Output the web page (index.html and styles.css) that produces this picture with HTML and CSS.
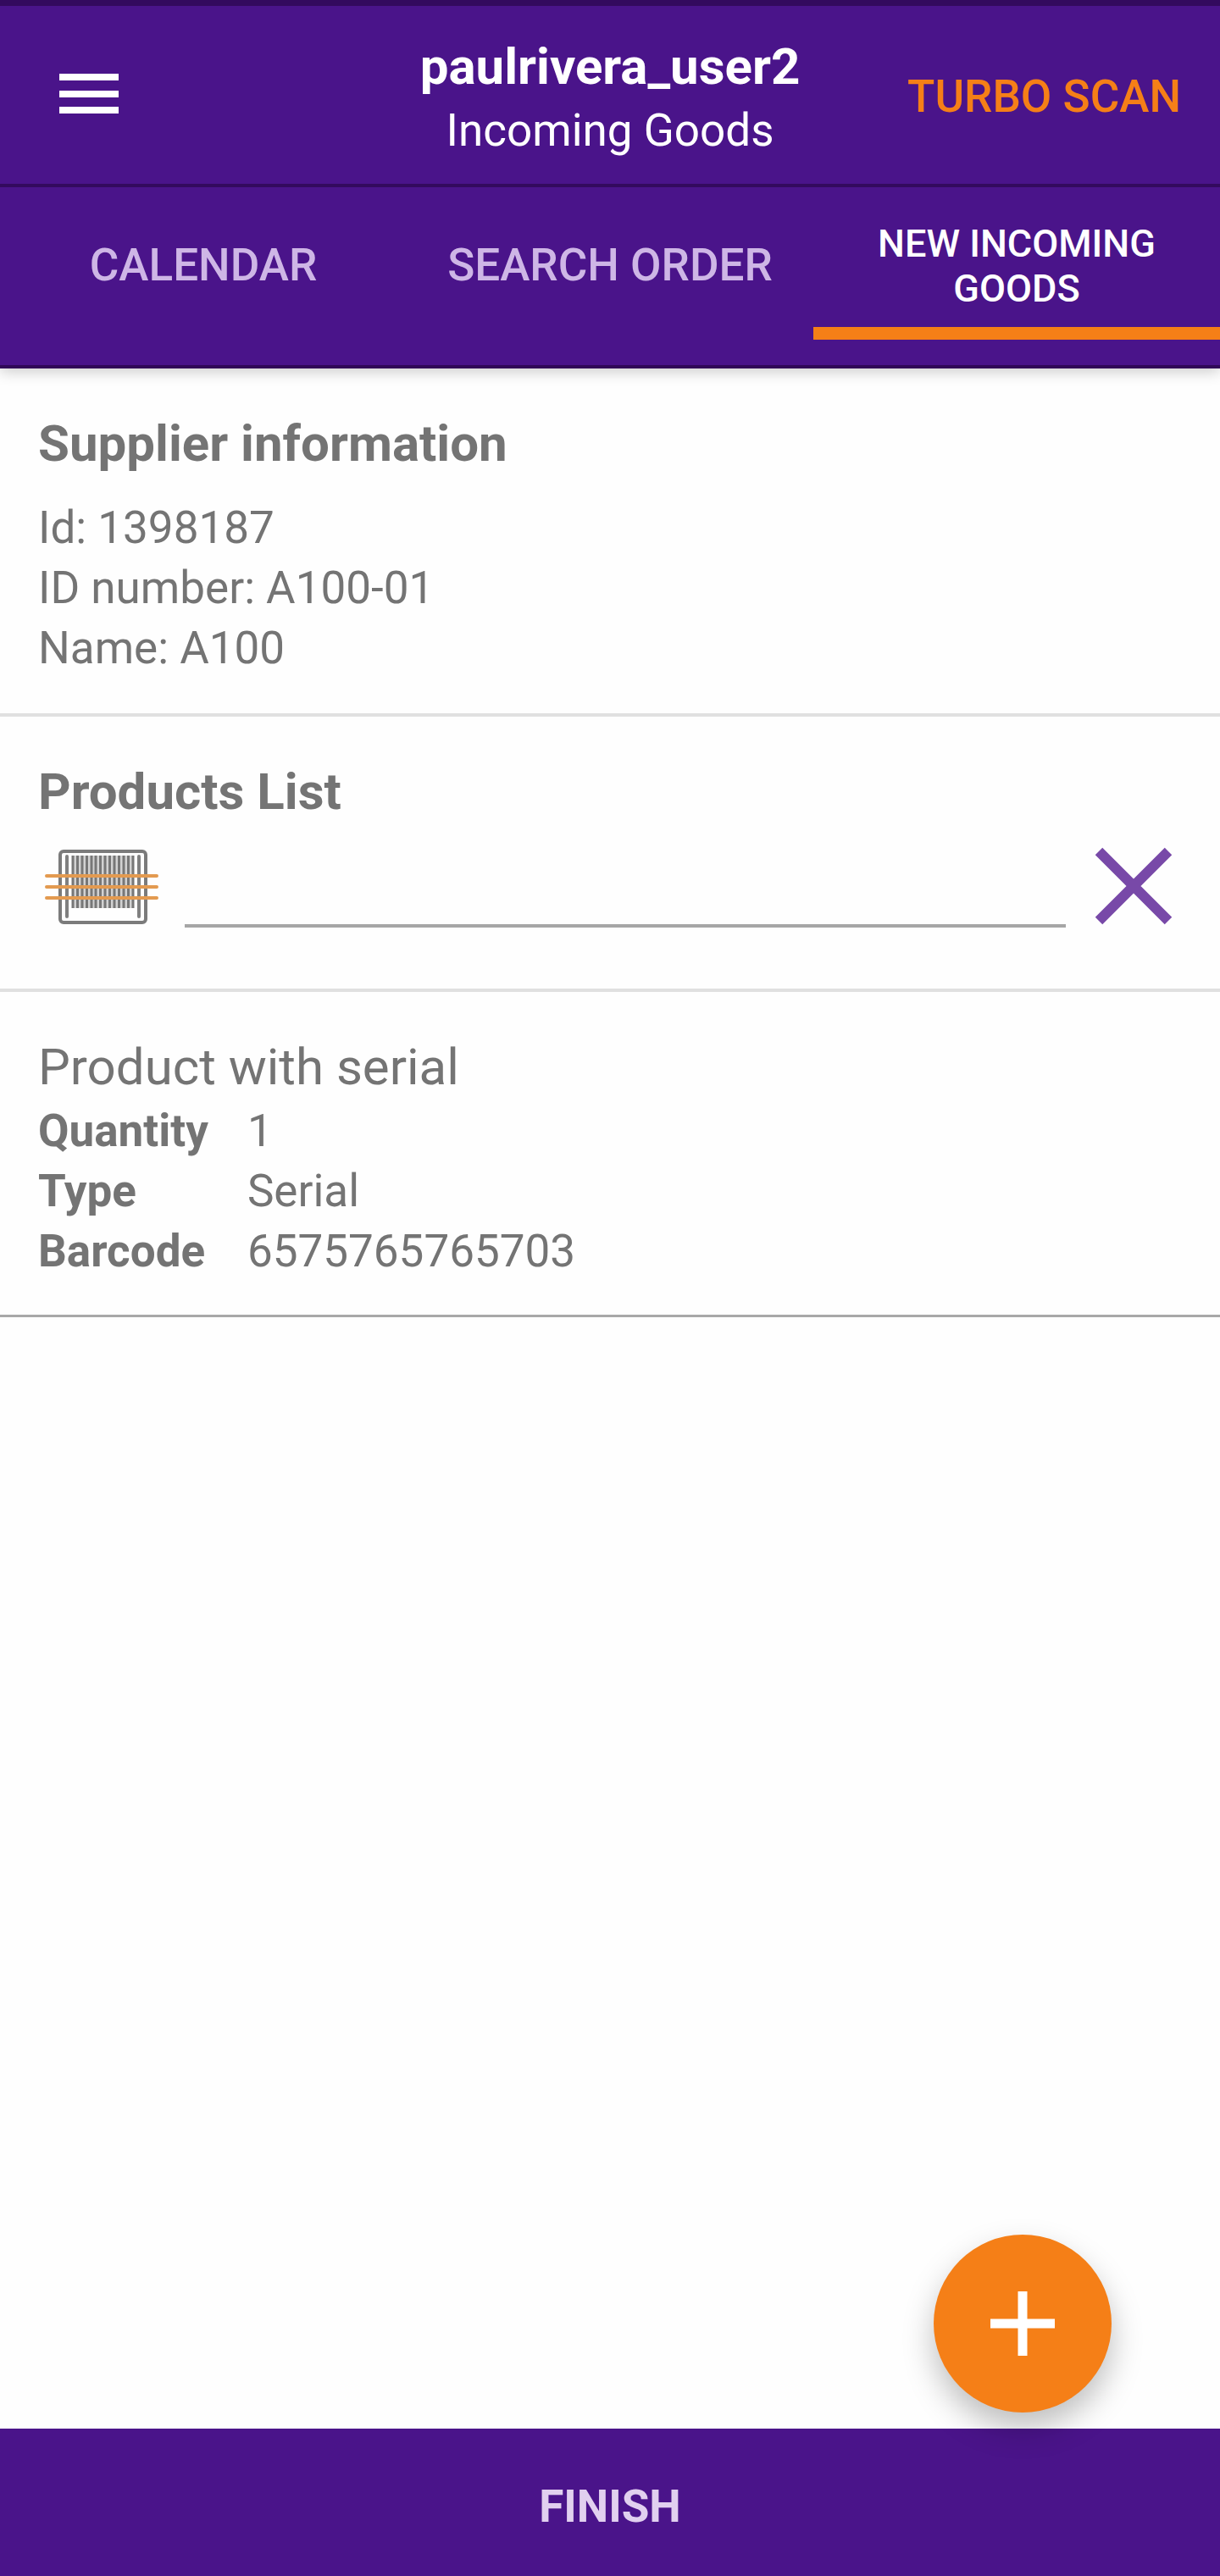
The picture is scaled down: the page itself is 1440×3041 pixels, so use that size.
FILE: index.html
```html
<!DOCTYPE html>
<html lang="en">
<head>
    <meta charset="UTF-8">
    <meta name="viewport" content="width=device-width, initial-scale=1.0">
    <title>Incoming Goods</title>
    <link rel="stylesheet" href="styles.css">
</head>
<body>
    <header class="header">
        <div class="top-bar">
            <button type="button" class="menu-btn" aria-label="Menu">
                <svg width="70" height="48" viewBox="0 0 70 48" fill="#fff">
                    <rect width="70" height="8" />
                    <rect y="20" width="70" height="8" />
                    <rect y="39" width="70" height="8" />
                </svg>
            </button>
            <div class="heading">
                <h1>paulrivera_user2</h1>
                <p>Incoming Goods</p>
            </div>
            <button type="button" class="turbo-btn">TURBO SCAN</button>
        </div>
        <nav class="tabs">
            <a href="#calendar" class="tab">CALENDAR</a>
            <a href="#search" class="tab">SEARCH ORDER</a>
            <a href="#new" class="tab active">NEW INCOMING GOODS</a>
        </nav>
    </header>

    <main>
        <section class="section supplier">
            <h2>Supplier information</h2>
            <p>Id: 1398187</p>
            <p>ID number: A100-01</p>
            <p>Name: A100</p>
        </section>

        <section class="section products">
            <h2><label for="barcode">Products List</label></h2>
            <form class="scan-row">
                <svg class="barcode-icon" width="150" height="98" viewBox="0 0 150 98" fill="none">
                    <rect x="26" y="8" width="101" height="84" rx="4" stroke="#7b7b7b" stroke-width="4" />
                    <path d="M34 14v71M119 14v71" stroke="#808080" stroke-width="4" stroke-linecap="round" />
                    <rect x="40" y="13" width="73" height="62" fill="#d2d2d2" />
                    <path d="M41 13v62M46.500 13v62M52 13v62M57.500 13v62M63 13v62M68 13v62M73.500 13v62M79 13v62M84.500 13v62M90 13v62M95.500 13v62M101 13v62M106.500 13v62M112 13v62" stroke="#777" stroke-width="3" />
                    <path d="M10 37h130M10 50h130M10 63h130" stroke="#e39a50" stroke-width="4" stroke-linecap="round" />
                </svg>
                <input type="text" id="barcode" name="barcode">
                <button type="reset" class="clear-btn" aria-label="Clear">
                    <svg width="92" height="92" viewBox="0 0 92 92">
                        <path d="M5 5l82 82M87 5L5 87" stroke="#7849a8" stroke-width="12" />
                    </svg>
                </button>
            </form>
        </section>

        <section class="section product">
            <h3>Product with serial</h3>
            <table>
                <tr><th scope="row">Quantity</th><td>1</td></tr>
                <tr><th scope="row">Type</th><td>Serial</td></tr>
                <tr><th scope="row">Barcode</th><td>6575765765703</td></tr>
            </table>
        </section>
    </main>

    <button type="button" class="add-btn" aria-label="Add product">
        <svg width="76" height="76" viewBox="0 0 76 76">
            <path d="M38 0v76M0 38h76" stroke="#fff" stroke-width="11" />
        </svg>
    </button>
    <button type="button" class="finish-btn">FINISH</button>
</body>
</html>
```

FILE: styles.css
```css
* {
    box-sizing: border-box;
    margin: 0;
    padding: 0;
}

body {
    display: flex;
    flex-direction: column;
    min-height: 100vh;
    background: #fefefe;
    color: #747474;
    font-family: Roboto, sans-serif;
    font-size: 53px;
    line-height: 71px;
}

button {
    border: none;
    background: none;
    font: inherit;
    cursor: pointer;
}

svg {
    display: block;
}

h1, h2, h3 {
    font-size: 60px;
    line-height: 80px;
}

/* header */
.header {
    background: #4a148a;
    border-top: 7px solid #330a5e;
    border-bottom: 4px solid #300858;
    box-shadow: 0 4px 16px rgba(0, 0, 0, 0.2);
}

.top-bar {
    display: grid;
    grid-template-columns: 1fr auto 1fr;
    height: 214px;
    padding: 32px 46px 0;
    border-bottom: 4px solid #330a5e;
    color: #fff;
    text-align: center;
}

.menu-btn {
    justify-self: start;
    align-self: start;
    padding: 48px 24px;
}

.turbo-btn {
    justify-self: end;
    align-self: start;
    padding-top: 40px;
    color: #f57f17;
    font-weight: 500;
}

/* tabs */
.tabs {
    display: flex;
    padding-bottom: 30px;
}

.tab {
    display: flex;
    flex: 1;
    align-items: center;
    justify-content: center;
    height: 180px;
    padding: 20px 45px 0;
    border-bottom: 15px solid transparent;
    color: #ceb6e6;
    font-weight: 500;
    line-height: 53px;
    text-align: center;
    text-decoration: none;
    white-space: nowrap;
}

.tab.active {
    border-color: #f57f17;
    color: #fff;
    font-size: 45px;
    white-space: normal;
}

/* content */
main {
    flex: 1;
}

.section {
    padding: 49px 45px 41px;
    border-bottom: 4px solid #e0e0e0;
}

.supplier h2 {
    margin-bottom: 24px;
}

.section.products {
    padding-bottom: 72px;
}

.scan-row {
    display: flex;
    align-items: center;
    gap: 23px;
    margin-top: 22px;
}

.scan-row input {
    flex: 1;
    min-width: 0;
    height: 98px;
    border: none;
    border-bottom: 4px solid #a6a6a6;
    outline: none;
    background: transparent;
    color: inherit;
    font: inherit;
}

.clear-btn {
    padding: 0 11px;
}

.section.product {
    padding-bottom: 39px;
    border-bottom: 3px solid #a8a8a8;
}

.product h3 {
    font-weight: 400;
}

.product table {
    border-collapse: collapse;
}

.product th {
    padding-right: 46px;
    text-align: left;
}

/* bottom */
.add-btn {
    position: fixed;
    right: 128px;
    bottom: 193px;
    display: flex;
    align-items: center;
    justify-content: center;
    width: 210px;
    height: 210px;
    border-radius: 50%;
    background: #f57f17;
    box-shadow: 0 18px 36px rgba(0, 0, 0, 0.25);
}

.finish-btn {
    height: 174px;
    padding-top: 10px;
    background: #4a148a;
    color: #e1d0ef;
    font-weight: 700;
}
```
